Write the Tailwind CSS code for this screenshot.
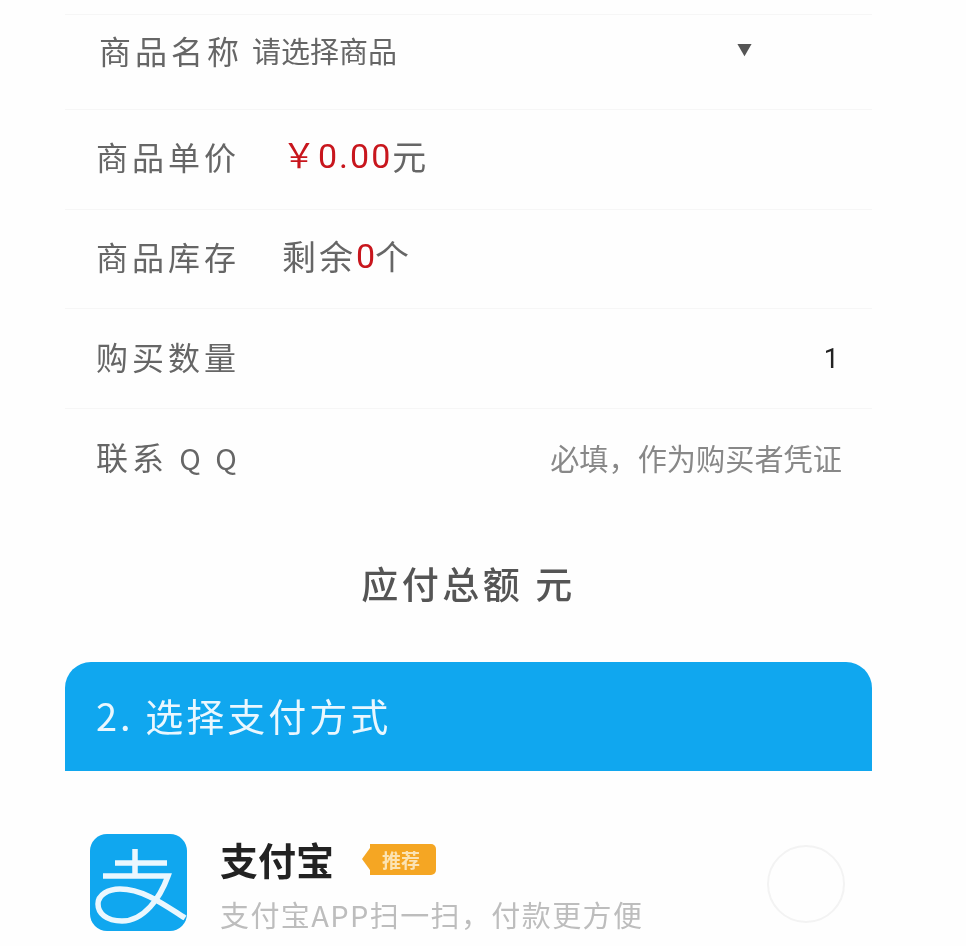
<!DOCTYPE html>
<html lang="zh-CN">
<head>
    <meta charset="UTF-8">
    <title>选择支付方式</title>
    <script src="https://cdn.jsdelivr.net/npm/@tailwindcss/browser@4"></script>
</head>
<body class="bg-[#fefefe] h-[946px] overflow-hidden font-['Noto_Sans_CJK_SC','Noto_Sans',sans-serif] text-[#666666]">

    <main class="w-[807px] ml-[65px] pt-[14px] blur-[0.6px]">

        <div class="h-[95px] border-t border-[#f6f6f6] flex items-center pl-[34px] pr-[120px] pb-[24px]">
            <span class="text-[32px] tracking-[4px] leading-none">商品名称</span>
            <span class="text-[29px] leading-none ml-[9px] flex-grow">请选择商品</span>
            <span class="text-[15px] leading-none text-[#555555] mb-[3px]">▼</span>
        </div>

        <div class="h-[100px] border-t border-[#f6f6f6] flex items-center pl-[31px] pb-[7px]">
            <span class="text-[32px] tracking-[4px] leading-none w-[186px]">商品单价</span>
            <span class="text-[34px] leading-none tracking-[2px] text-[#c8161d] font-['Roboto',sans-serif]">￥0.00</span>
            <span class="text-[34px] leading-none">元</span>
        </div>

        <div class="h-[99px] border-t border-[#f6f6f6] flex items-center pl-[31px] pb-[6px]">
            <span class="text-[32px] tracking-[4px] leading-none w-[186px]">商品库存</span>
            <span class="text-[34px] leading-none tracking-[3px]">剩余</span>
            <span class="text-[34px] leading-none text-[#c8161d] font-['Roboto',sans-serif]">0</span>
            <span class="text-[34px] leading-none">个</span>
        </div>

        <div class="h-[100px] border-t border-[#f6f6f6] flex items-center justify-between pl-[31px] pr-[33px] pb-[6px]">
            <span class="text-[32px] tracking-[4px] leading-none">购买数量</span>
            <span class="text-[27px] leading-none text-[#222222] font-['Roboto',sans-serif] mt-[8px]">1</span>
        </div>

        <div class="h-[100px] border-t border-[#f6f6f6] flex items-center justify-between pl-[31px] pr-[30px] pb-[6px]">
            <span class="text-[32px] tracking-[4px] leading-none">联系 <span class="text-[29px]">Q Q</span></span>
            <span class="text-[29.2px] leading-none text-[#888888] mt-[4px]">必填，作为购买者凭证</span>
        </div>

        <div class="h-[154px] flex items-start justify-center pt-[57px]">
            <span class="text-[37px] tracking-[3.5px] leading-none font-medium text-[#555555]">应付总额 元</span>
        </div>

        <div class="h-[109px] bg-[#10a7ef] rounded-t-[26px] flex items-center pl-[31px] pb-[3px]">
            <span class="text-[38px] tracking-[3px] leading-none text-[#eaf7fe]">2. 选择支付方式</span>
        </div>

        <div class="flex items-start pl-[25px] pt-[63px]">
            <svg class="w-[97px] h-[97px] shrink-0" viewBox="0 0 97 97">
                <rect width="97" height="97" rx="17" fill="#10a7ef"/>
                <path d="M25 29H77M45 15V41M13 42H78C70 64 54 87 32 87C16 87 8 79 8 70C8 61 18 55 30 55C54 55 76 72 95 84" fill="none" stroke="#eaf7fe" stroke-width="5.5"/>
            </svg>
            <div class="ml-[33px] flex flex-col">
                <div class="flex items-center mt-[6px]">
                    <span class="text-[38px] font-bold leading-none text-[#222222]">支付宝</span>
                    <span class="ml-[28px] flex items-center">
                        <span class="w-0 h-0 border-y-[11px] border-y-transparent border-r-[8px] border-r-[#f5a623]"></span>
                        <span class="bg-[#f5a623] text-[#fbe3b4] text-[19px] font-bold leading-none h-[31px] flex items-center pl-[12px] pr-[16px] rounded-r-[5px]">推荐</span>
                    </span>
                </div>
                <span class="text-[29px] leading-none text-[#bdbdbd] mt-[22px] tracking-[1.4px]">支付宝APP扫一扫，付款更方便</span>
            </div>
            <span class="ml-auto mr-[27px] mt-[11px] w-[78px] h-[78px] rounded-full border-2 border-[#f3f3f3]"></span>
        </div>

    </main>

</body>
</html>
